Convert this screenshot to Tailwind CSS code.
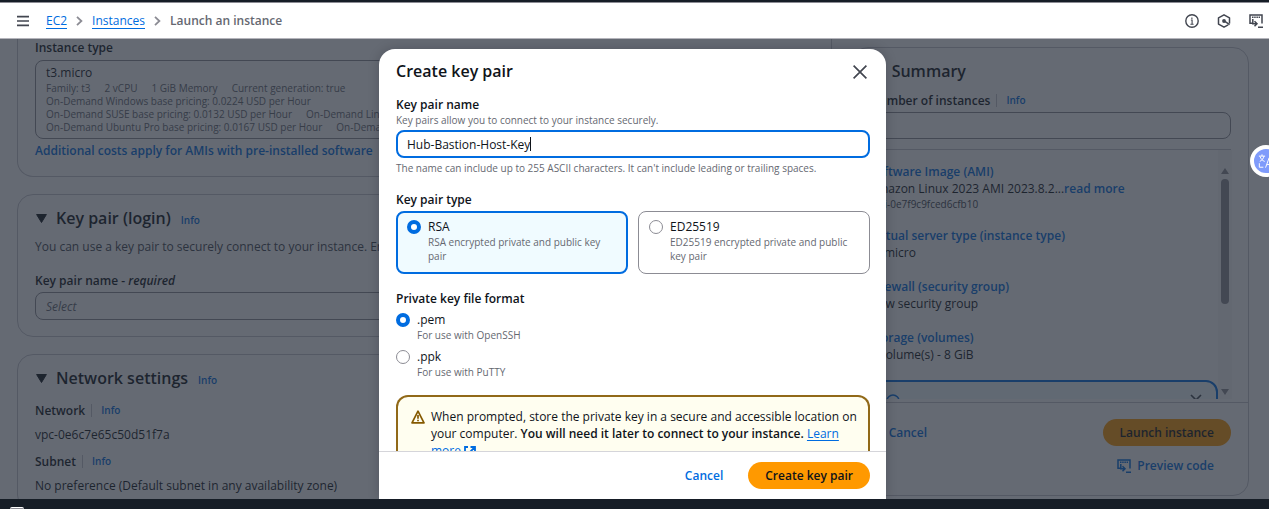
<!DOCTYPE html>
<html lang="en">
<head>
<meta charset="utf-8">
<title>Launch an instance | EC2</title>
<script src="https://cdn.jsdelivr.net/npm/@tailwindcss/browser@4"></script>
</head>
<body class="flex h-screen flex-col overflow-hidden bg-white font-['Open_Sans',sans-serif] text-[12px] leading-[17px] text-[#0f141a]">
<div class="h-[2px] shrink-0 bg-[#161d26]"></div>
<header class="flex h-[37px] shrink-0 items-center border-t border-b border-t-[#8c8c94] border-b-[#b4b4bb] pr-[6px] pl-[17px]">
  <button type="button" aria-label="Open navigation" class="text-[#424650]">
    <svg class="size-3" viewBox="0 0 12 12" fill="none" stroke="currentColor" stroke-width="1.6"><path d="M0 1.6h12M0 6h12M0 10.4h12"/></svg>
  </button>
  <nav aria-label="Breadcrumbs" class="ml-[17px] flex items-center gap-[9px]">
    <a href="#" class="border-b border-[#006ce0] leading-[15px] text-[#006ce0]">EC2</a>
    <svg class="h-[10px] w-[7px] text-[#8c8c94]" viewBox="0 0 7 10" fill="none" stroke="currentColor" stroke-width="1.8"><path d="M1 .8 5.4 5 1 9.2"/></svg>
    <a href="#" class="border-b border-[#006ce0] leading-[15px] text-[#006ce0]">Instances</a>
    <svg class="h-[10px] w-[7px] text-[#8c8c94]" viewBox="0 0 7 10" fill="none" stroke="currentColor" stroke-width="1.8"><path d="M1 .8 5.4 5 1 9.2"/></svg>
    <span class="font-semibold text-[#656871]">Launch an instance</span>
  </nav>
  <div class="ml-auto flex items-center gap-[18px] text-[#424650]">
    <button type="button" aria-label="Info"><svg class="size-[14px]" viewBox="0 0 14 14" fill="none" stroke="currentColor" stroke-width="1.4"><circle cx="7" cy="7" r="6.2"/><path d="M5.9 6h1.2v4.4M5.4 10.3h3.2M6.9 3.4v1.5" stroke-width="1.1"/></svg></button>
    <button type="button" aria-label="Tutorials"><svg class="size-[14px]" viewBox="0 0 14 14" fill="none" stroke="currentColor" stroke-width="1.5" stroke-linejoin="round"><path d="M11.2 10.9 7 13.2 1.500 10.100V3.900L7 .8l5.500 3.100V9.500"/><circle cx="7" cy="7" r="1.900" fill="currentColor" stroke="none"/><path d="M7.500 7.200 12.600 10.600"/></svg></button>
    <button type="button" aria-label="CloudShell"><svg class="size-[14px]" viewBox="0 0 14 14" fill="none" stroke="currentColor" stroke-width="1.500"><path d="M4 9.300H1V.9h12v8.500"/><path d="M3 3.300h8" stroke-dasharray="1.500 .7"/><path d="M3.800 5v4.800h3.500M5.500 7.300 8 9.800 5.500 12.300M9 13.200h5"/></svg></button>
  </div>
</header>

<div class="relative flex min-h-0 flex-1 overflow-hidden">
  <main class="flex h-full flex-1 gap-5 overflow-hidden pr-5 pl-[17px]">
    <div class="flex flex-[816] flex-col gap-[17px]">
      <section class="shrink-0 rounded-b-2xl border border-t-0 border-[#c6c6cd] px-[17px] pb-[17px]">
        <h3 class="font-semibold">Instance type</h3>
        <div class="mt-1 rounded-lg border border-[#8c8c94] px-[10px] pt-[3px] pb-1">
          <div class="leading-[18px]">t3.micro</div>
          <div class="text-[10px] leading-[13px] whitespace-nowrap text-[#656871]">
            <div class="flex gap-[14px]"><span>Family: t3</span><span>2 vCPU</span><span>1 GiB Memory</span><span>Current generation: true</span></div>
            <div>On-Demand Windows base pricing: 0.0224 USD per Hour</div>
            <div class="flex gap-[14px]"><span>On-Demand SUSE base pricing: 0.0132 USD per Hour</span><span>On-Demand Linux</span></div>
            <div class="flex gap-[14px]"><span>On-Demand Ubuntu Pro base pricing: 0.0167 USD per Hour</span><span>On-Demand</span></div>
          </div>
        </div>
        <a href="#" class="mt-[3px] block font-semibold text-[#006ce0]">Additional costs apply for AMIs with pre-installed software</a>
      </section>

      <section class="shrink-0 rounded-2xl border border-[#c6c6cd] px-[17px] pt-3 pb-4">
        <div class="flex items-center">
          <svg class="ml-px h-[9px] w-[11px]" viewBox="0 0 11 9"><path d="M.6.5h9.800L5.500 8.500z" fill="currentColor" stroke="currentColor" stroke-linejoin="round"/></svg>
          <h2 class="ml-[9px] text-[16px] leading-[22px] font-semibold">Key pair (login)</h2>
          <a href="#" class="mt-1 ml-[10px] text-[10px] font-semibold text-[#006ce0]">Info</a>
        </div>
        <p class="mt-[9px] whitespace-nowrap text-[#424650]">You can use a key pair to securely connect to your instance. Ensure</p>
        <div id="kp-label" class="mt-[17px] font-semibold">Key pair name - <em>required</em></div>
        <button type="button" aria-labelledby="kp-label" class="mt-[3px] flex h-7 w-full items-center rounded-lg border border-[#8c8c94] px-[10px] text-[#656871] italic">Select</button>
      </section>

      <section class="shrink-0 rounded-2xl border border-[#c6c6cd] px-[17px] pt-3 pb-4">
        <div class="flex items-center">
          <svg class="ml-px h-[9px] w-[11px]" viewBox="0 0 11 9"><path d="M.6.5h9.800L5.500 8.500z" fill="currentColor" stroke="currentColor" stroke-linejoin="round"/></svg>
          <h2 class="ml-[9px] text-[16px] leading-[22px] font-semibold">Network settings</h2>
          <a href="#" class="mt-1 ml-[10px] text-[10px] font-semibold text-[#006ce0]">Info</a>
        </div>
        <div class="mt-[13px] flex items-center font-semibold">Network<span class="ml-[6px] h-[13px] w-px bg-[#c6c6cd]"></span><a href="#" class="ml-[9px] text-[10px] text-[#006ce0]">Info</a></div>
        <div class="mt-[7px]">vpc-0e6c7e65c50d51f7a</div>
        <div class="mt-[10px] flex items-center font-semibold">Subnet<span class="ml-[6px] h-[13px] w-px bg-[#c6c6cd]"></span><a href="#" class="ml-[9px] text-[10px] text-[#006ce0]">Info</a></div>
        <div class="mt-[7px]">No preference (Default subnet in any availability zone)</div>
      </section>
    </div>

    <aside class="mt-2 mb-[3px] flex flex-[396] flex-col rounded-2xl border border-[#c6c6cd]">
      <div class="px-[17px] pt-3">
        <div class="flex items-center">
          <svg class="ml-[2px] h-[9px] w-[11px]" viewBox="0 0 11 9"><path d="M.6.5h9.800L5.500 8.500z" fill="currentColor" stroke="currentColor" stroke-linejoin="round"/></svg>
          <h2 class="ml-[9px] text-[16px] leading-[22px] font-semibold">Summary</h2>
        </div>
        <div class="mt-[10px] flex items-center font-semibold"><label for="count">Number of instances</label><span class="ml-[6px] h-[13px] w-px bg-[#c6c6cd]"></span><a href="#" class="ml-[9px] text-[10px] text-[#006ce0]">Info</a></div>
        <input id="count" type="text" value="1" class="mt-[3px] block h-[27px] w-full rounded-lg border border-[#8c8c94] px-[10px]">
        <div class="mt-[10px] h-px bg-[#c6c6cd]"></div>
      </div>
      <div class="mr-4 ml-[17px] flex min-h-0 flex-1 overflow-hidden">
        <div class="min-w-0 flex-1 pt-[13px]">
          <a href="#" class="block font-semibold text-[#006ce0]">Software Image (AMI)</a>
          <div class="whitespace-nowrap">Amazon Linux 2023 AMI 2023.8.2...<a href="#" class="font-semibold text-[#006ce0]">read more</a></div>
          <div class="text-[10px] leading-[14px] text-[#424650]">ami-0e7f9c9fced6cfb10</div>
          <a href="#" class="mt-4 block font-semibold text-[#006ce0]">Virtual server type (instance type)</a>
          <div>t3.micro</div>
          <a href="#" class="mt-[17px] block font-semibold text-[#006ce0]">Firewall (security group)</a>
          <div>New security group</div>
          <a href="#" class="mt-[17px] block font-semibold text-[#006ce0]">Storage (volumes)</a>
          <div>1 volume(s) - 8 GiB</div>
          <div class="mt-[17px] flex h-20 justify-between rounded-xl border-2 border-[#006ce0] bg-[#f0fbff] px-[14px] pt-3">
            <svg class="size-[14px] text-[#006ce0]" viewBox="0 0 14 14" fill="none" stroke="currentColor" stroke-width="1.500"><circle cx="7" cy="7" r="6"/><path d="M7 6v4"/></svg>
            <svg class="size-3 text-[#424650]" viewBox="0 0 12 12" fill="none" stroke="currentColor" stroke-width="1.600"><path d="m1 1 10 10M11 1 1 11"/></svg>
          </div>
        </div>
        <div class="flex w-[14px] flex-col items-center bg-[#f8f8f8] pt-[18px]">
          <svg class="h-[6px] w-2" viewBox="0 0 8 6"><path d="M4 0 8 6H0z" fill="#8c8c94"/></svg>
          <div class="mt-[5px] h-[125px] w-2 rounded-full bg-[#8c8c94]"></div>
          <svg class="mt-auto mb-1 h-[6px] w-2" viewBox="0 0 8 6"><path d="M0 0h8L4 6z" fill="#8c8c94"/></svg>
        </div>
      </div>
      <div class="mt-[3px] border-t border-[#c6c6cd] px-[17px] pt-4 pb-[21px] font-semibold">
        <div class="flex items-center justify-between">
          <button type="button" class="px-[19px] text-[#006ce0]">Cancel</button>
          <button type="button" class="h-[27px] rounded-full bg-[#ff9900] px-[17px]">Launch instance</button>
        </div>
        <button type="button" class="mt-[11px] mr-[17px] ml-auto flex items-center gap-[6px] text-[#006ce0]">
          <svg class="size-[14px]" viewBox="0 0 14 14" fill="none" stroke="currentColor" stroke-width="1.500"><path d="M4 9.300H1V.9h12v8.500"/><path d="M3 3.300h8" stroke-dasharray="1.500 .7"/><path d="M3.800 5v4.800h3.500M5.500 7.300 8 9.800 5.500 12.300M9 13.200h5"/></svg>
          Preview code
        </button>
      </div>
    </aside>
  </main>

  <div class="absolute inset-0 flex justify-center bg-[rgb(35,43,55)]/70 pt-[10px] pr-1">
    <div role="dialog" aria-modal="true" aria-labelledby="dlg-title" class="flex w-full max-w-[507px] flex-col overflow-hidden rounded-t-2xl bg-white shadow-[0_0_12px_rgba(0,7,22,0.2)]">
      <div class="flex shrink-0 items-center justify-between pt-[11px] pr-4 pb-3 pl-[17px]">
        <h2 id="dlg-title" class="text-[16px] leading-[23px] font-semibold">Create key pair</h2>
        <button type="button" aria-label="Close" class="mr-[3px] text-[#424650]"><svg class="size-[14px]" viewBox="0 0 14 14" fill="none" stroke="currentColor" stroke-width="1.700"><path d="m.6.6 12.800 12.800M13.400.6.6 13.400"/></svg></button>
      </div>
      <div class="min-h-0 flex-1 overflow-hidden pt-px pr-4 pl-[17px]">
        <label for="name" class="block font-semibold">Key pair name</label>
        <p class="text-[10px] leading-[14px] text-[#656871]">Key pairs allow you to connect to your instance securely.</p>
        <div class="relative mt-[3px]">
          <input id="name" type="text" value="Hub-Bastion-Host-Key" class="block h-7 w-full rounded-lg border-2 border-[#006ce0] px-[9px] outline-none">
          <span class="absolute top-[7px] left-[134px] h-[14px] w-px bg-[#0f141a]"></span>
        </div>
        <p class="mt-[3px] text-[10px] leading-[14px] text-[#656871]">The name can include up to 255 ASCII characters. It can't include leading or trailing spaces.</p>

        <fieldset class="mt-4">
          <legend class="font-semibold">Key pair type</legend>
          <div class="mt-[3px] grid grid-cols-2 gap-[10px]">
            <label class="flex items-start gap-[7px] rounded-lg border-2 border-[#006ce0] bg-[#f0fbff] px-[9px] pt-[5px] pb-[9px]">
              <input type="radio" name="type" checked class="mt-[2px] size-[14px] shrink-0 appearance-none rounded-full border border-[#8c8c94] bg-white checked:border-[4px] checked:border-[#006ce0]">
              <span><span class="block">RSA</span><span class="block text-[10px] leading-[14px] text-[#656871]">RSA encrypted private and public key pair</span></span>
            </label>
            <label class="flex items-start gap-[7px] rounded-lg border border-[#8c8c94] px-[10px] pt-[6px] pb-[10px]">
              <input type="radio" name="type" class="mt-[2px] size-[14px] shrink-0 appearance-none rounded-full border border-[#8c8c94] bg-white checked:border-[4px] checked:border-[#006ce0]">
              <span><span class="block">ED25519</span><span class="block text-[10px] leading-[14px] text-[#656871]">ED25519 encrypted private and public key pair</span></span>
            </label>
          </div>
        </fieldset>

        <fieldset class="mt-4">
          <legend class="font-semibold">Private key file format</legend>
          <div class="mt-[4px] flex flex-col gap-[6px]">
            <label class="flex items-start gap-[7px]">
              <input type="radio" name="format" checked class="mt-[2px] size-[14px] shrink-0 appearance-none rounded-full border border-[#8c8c94] bg-white checked:border-[4px] checked:border-[#006ce0]">
              <span><span class="block">.pem</span><span class="block text-[10px] leading-[14px] text-[#656871]">For use with OpenSSH</span></span>
            </label>
            <label class="flex items-start gap-[7px]">
              <input type="radio" name="format" class="mt-[2px] size-[14px] shrink-0 appearance-none rounded-full border border-[#8c8c94] bg-white checked:border-[4px] checked:border-[#006ce0]">
              <span><span class="block">.ppk</span><span class="block text-[10px] leading-[14px] text-[#656871]">For use with PuTTY</span></span>
            </label>
          </div>
        </fieldset>

        <div class="mt-4 flex items-start gap-[6px] rounded-xl border-2 border-[#855900]/90 bg-[#fffef0] pt-[11px] pr-2 pb-3 pl-[13px]">
          <svg class="mt-[2px] size-[14px] shrink-0 text-[#855900]" viewBox="0 0 14 14" fill="none" stroke="currentColor" stroke-width="1.700" stroke-linejoin="round"><path d="M7 1.200 13 12.800H1z"/><path d="M7 5v3.800M7 9.700v1.500"/></svg>
          <p>When prompted, store the private key in a secure and accessible location on your computer. <b class="font-semibold">You will need it later to connect to your instance.</b> <a href="#" class="text-[#006ce0] underline underline-offset-2">Learn more <svg class="inline size-3" viewBox="0 0 12 12" fill="none" stroke="currentColor" stroke-width="1.800"><path d="M4 1H1v10h10V8M6.500 1H11v4.500M11 1 5.500 6.500"/></svg></a></p>
        </div>
      </div>
      <div class="flex h-12 shrink-0 items-center justify-end gap-[6px] border-t border-[#d5d5da] pr-4 pl-[17px] font-semibold">
        <button type="button" class="px-[19px] text-[#006ce0]">Cancel</button>
        <button type="button" class="h-[27px] rounded-full bg-[#ff9900] px-[17px]">Create key pair</button>
      </div>
    </div>
  </div>

  <button type="button" aria-label="Translate" class="absolute top-[106px] -right-[13px] flex size-8 items-center justify-center rounded-full border-[4px] border-white bg-[#7f9bfb]">
    <svg class="size-4" viewBox="0 0 18 18" fill="none" stroke="#fff" stroke-width="1.100"><path d="M1 3.500h7M4.500 1.500v2M2 9.500c2.500-1.300 4.200-3.300 4.700-6M2.300 4c1 2.700 2.700 4.500 5.200 5.500M1.500 11.500V16h4.500M8.500 16.500l4-11 4 11M10 13h5"/></svg>
  </button>
</div>

<footer class="flex h-[10px] shrink-0 items-end overflow-hidden bg-[#161d26] pl-[10px]">
  <span class="h-[2px] w-[14px] rounded-t-[3px] border-t border-white bg-[#8c8c94]"></span>
</footer>
</body>
</html>
